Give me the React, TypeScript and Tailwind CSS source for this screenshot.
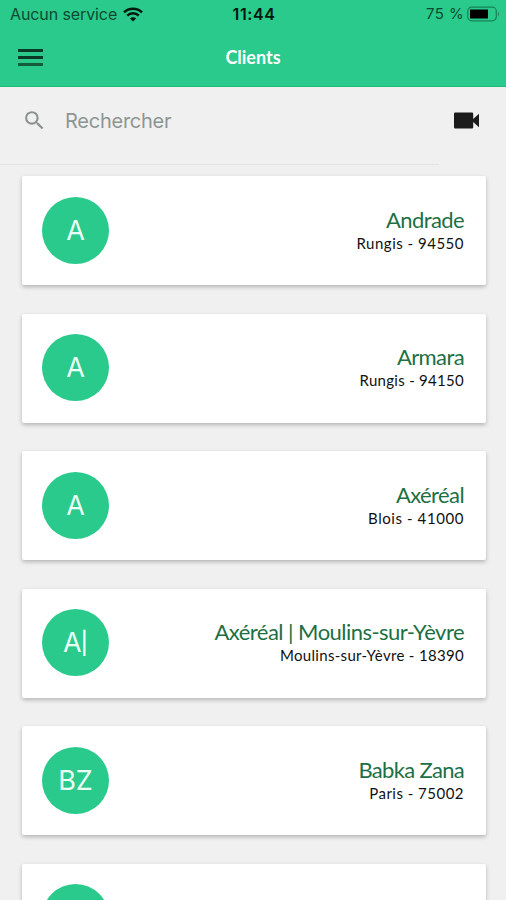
import React from 'react';

interface Client {
  initials: string;
  name: string;
  place: string;
  nameClass?: string;
  placeClass: string;
}

const clients: Client[] = [
  { initials: 'A', name: 'Andrade', place: 'Rungis - 94550', placeClass: 'tracking-[0.5px]' },
  { initials: 'A', name: 'Armara', place: 'Rungis - 94150', placeClass: 'tracking-[0.28px]' },
  { initials: 'A', name: 'Axéréal', place: 'Blois - 41000', placeClass: 'tracking-[0.58px]' },
  { initials: 'A|', name: 'Axéréal | Moulins-sur-Yèvre', place: 'Moulins-sur-Yèvre - 18390', nameClass: 'tracking-[-0.54px]', placeClass: 'tracking-[0.32px]' },
  { initials: 'BZ', name: 'Babka Zana', place: 'Paris - 75002', nameClass: 'tracking-[-0.68px]', placeClass: 'tracking-[0.48px]' },
  { initials: 'C', name: 'Camarades', place: 'Paris - 75011', nameClass: 'tracking-[-0.4px] pt-[3px]', placeClass: 'tracking-[0.48px]' },
];

const StatusBar = () => (
  <div className="flex h-7 items-center pl-[10px] pr-[6px] text-[16px] leading-7 text-[#0d4a31]">
    <div className="flex flex-1 items-center gap-[6px]">
      <span className="tracking-[-0.1px]">Aucun service</span>
      <svg width="20" height="15" viewBox="0 0 20 15" fill="none" stroke="#04160e" strokeWidth="2.5">
        <path d="M1 5.3a13 13 0 0 1 18 0" />
        <path d="M4.2 8.7a8.3 8.3 0 0 1 11.6 0" />
        <path d="M10 14.6 6.9 11.5a4.4 4.4 0 0 1 6.2 0z" fill="#04160e" stroke="none" />
      </svg>
    </div>
    <span className="mr-[2px] font-semibold tracking-[0.6px] text-[#04160e]">11:44</span>
    <div className="flex flex-1 items-center justify-end gap-[3px]">
      <span className="text-[15px] tracking-[0.4px]">75 %</span>
      <svg width="33" height="16" viewBox="0 0 33 16" fill="none">
        <rect x="0.7" y="1.2" width="28.6" height="13.6" rx="4" stroke="#178258" strokeWidth="1.2" />
        <rect x="3" y="3.5" width="18" height="9" rx="0.5" fill="#000" />
        <path d="M31 5.5q2 2.5 0 5z" fill="#178258" />
      </svg>
    </div>
  </div>
);

const ClientCard = ({ client }: { client: Client }) => (
  <div className="flex h-[109px] shrink-0 items-center justify-between rounded-[2px] bg-white pl-[20.5px] pr-[22px] pb-px shadow-[0_2px_4px_rgba(0,0,0,0.25)]">
    <div className="flex size-[67px] items-center justify-center rounded-full bg-[#29ca8b] font-[Inter,sans-serif] text-[27px] leading-none text-[#ecfff6]">
      {client.initials.split('').map((letter) => (
        <span key={letter} className={letter === '|' ? '-ml-px text-[22px] font-medium' : ''}>
          {letter}
        </span>
      ))}
    </div>
    <div className="flex flex-col items-end whitespace-nowrap font-[Lato,sans-serif]">
      <span className={`text-[22px] leading-[26px] text-[#1c7044] ${client.nameClass ?? 'tracking-[-0.6px]'}`}>
        {client.name}
      </span>
      <span className={`text-[15px] leading-[21px] text-[#111] ${client.placeClass}`}>{client.place}</span>
    </div>
  </div>
);

const App: React.FC = () => {
  return (
    <div className="flex h-[900px] w-[506px] flex-col overflow-hidden bg-[#f0f0f0] font-[Inter,sans-serif]">
      <header className="h-[87px] shrink-0 border-b border-[#1fb97b] bg-[#29ca8b]">
        <StatusBar />
        <div className="grid h-[59px] grid-cols-3 items-center px-[18px]">
          <button className="flex w-[25px] flex-col gap-[4px]">
            <span className="h-[3px] w-full bg-[#0b3a26]" />
            <span className="h-[3px] w-full bg-[#0b3a26]" />
            <span className="h-[3px] w-full bg-[#145c3e]" />
          </button>
          <h1 className="text-center font-[Lato,sans-serif] text-[18px] font-bold text-white">Clients</h1>
        </div>
      </header>

      {/* Search row */}
      <div className="flex h-[78px] shrink-0">
        <div className="flex w-[439px] border-b border-[#e2e2e2] pl-[22px] pt-[21px]">
          <svg width="25" height="25" viewBox="0 0 24 24" fill="#8b9290">
            <path d="M15.5 14h-.79l-.28-.27A6.47 6.47 0 0 0 16 9.5 6.5 6.5 0 1 0 9.5 16c1.61 0 3.09-.59 4.23-1.57l.27.28v.79l5 4.99L20.49 19l-4.99-5zm-6 0C7.01 14 5 11.99 5 9.5S7.01 5 9.5 5 14 7.01 14 9.5 11.99 14 9.5 14z" />
          </svg>
          <span className="ml-[18px] mt-px text-[20px] leading-6 tracking-[-0.25px] text-[#8d9593]">Rechercher</span>
        </div>
        <svg className="ml-[14px] mt-[25px]" width="27" height="17" viewBox="0 0 27 17" fill="#1b1b1b">
          <path d="M2.2 0.5h16.8q1.2 0 1.2 1.2v5.3l5.8-5.3v13.6l-5.8-5.3v5.3q0 1.2-1.2 1.2H2.2Q1 16.5 1 15.3V1.7Q1 .5 2.2 .5z" />
        </svg>
      </div>

      <main className="flex flex-col gap-[28.6px] pt-[11px] pl-[21.5px] pr-[20px]">
        {clients.map((client) => (
          <ClientCard key={client.name} client={client} />
        ))}
      </main>
    </div>
  );
};

export default App;
